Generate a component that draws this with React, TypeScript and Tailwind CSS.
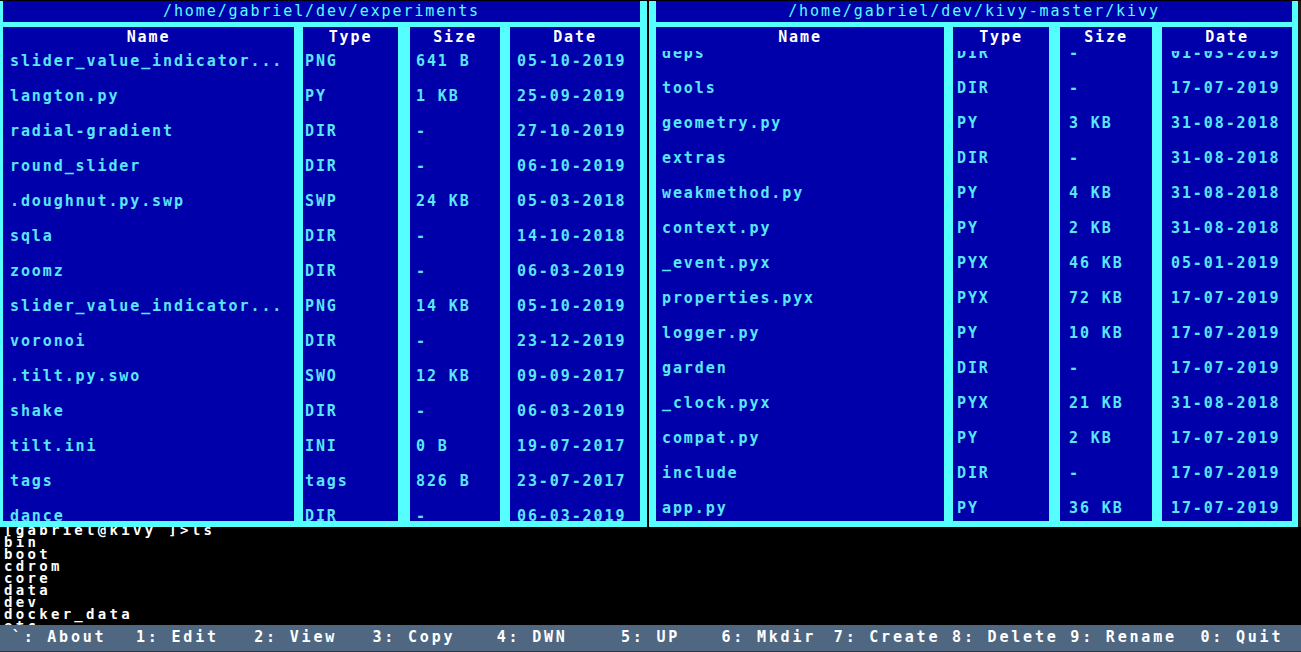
// Two-pane retro file manager with a shell strip and a function-key bar

const mono = "font-['DejaVu_Sans_Mono','Liberation_Mono',monospace]";

type Row = [string, string, string, string];

const leftRows: Row[] = [
  ['slider_value_indicator...', 'PNG', '641 B', '05-10-2019'],
  ['langton.py', 'PY', '1 KB', '25-09-2019'],
  ['radial-gradient', 'DIR', '-', '27-10-2019'],
  ['round_slider', 'DIR', '-', '06-10-2019'],
  ['.doughnut.py.swp', 'SWP', '24 KB', '05-03-2018'],
  ['sqla', 'DIR', '-', '14-10-2018'],
  ['zoomz', 'DIR', '-', '06-03-2019'],
  ['slider_value_indicator...', 'PNG', '14 KB', '05-10-2019'],
  ['voronoi', 'DIR', '-', '23-12-2019'],
  ['.tilt.py.swo', 'SWO', '12 KB', '09-09-2017'],
  ['shake', 'DIR', '-', '06-03-2019'],
  ['tilt.ini', 'INI', '0 B', '19-07-2017'],
  ['tags', 'tags', '826 B', '23-07-2017'],
  ['dance', 'DIR', '-', '06-03-2019'],
];

const rightRows: Row[] = [
  ['deps', 'DIR', '-', '01-03-2019'],
  ['tools', 'DIR', '-', '17-07-2019'],
  ['geometry.py', 'PY', '3 KB', '31-08-2018'],
  ['extras', 'DIR', '-', '31-08-2018'],
  ['weakmethod.py', 'PY', '4 KB', '31-08-2018'],
  ['context.py', 'PY', '2 KB', '31-08-2018'],
  ['_event.pyx', 'PYX', '46 KB', '05-01-2019'],
  ['properties.pyx', 'PYX', '72 KB', '17-07-2019'],
  ['logger.py', 'PY', '10 KB', '17-07-2019'],
  ['garden', 'DIR', '-', '17-07-2019'],
  ['_clock.pyx', 'PYX', '21 KB', '31-08-2018'],
  ['compat.py', 'PY', '2 KB', '17-07-2019'],
  ['include', 'DIR', '-', '17-07-2019'],
  ['app.py', 'PY', '36 KB', '17-07-2019'],
];

const headings = ['Name', 'Type', 'Size', 'Date'];

const keys = [
  '`: About',
  '1: Edit',
  '2: View',
  '3: Copy',
  '4: DWN',
  '5: UP',
  '6: Mkdir',
  '7: Create',
  '8: Delete',
  '9: Rename',
  '0: Quit',
];

const shell = ['[gabriel@kivy ]>ls', 'bin', 'boot', 'cdrom', 'core', 'data', 'dev', 'docker_data', 'etc'];

function Column({
  index,
  rows,
  width,
  pad,
  shift,
}: {
  index: number;
  rows: Row[];
  width: string;
  pad: string;
  shift: string;
}) {
  return (
    <div className={`${width} flex flex-col bg-[#0000aa] overflow-hidden`}>
      <div className="h-[24px] shrink-0 leading-[20px] text-center font-bold text-white">
        {headings[index]}
      </div>
      <div className="flex-1 overflow-hidden">
        <div className={shift}>
          {rows.map((r, i) => (
            <div
              key={i}
              className={`h-[35px] leading-[35px] whitespace-nowrap font-bold text-[#5ae6fa] ${pad}`}
            >
              {r[index]}
            </div>
          ))}
        </div>
      </div>
    </div>
  );
}

function Panel({
  path,
  rows,
  widths,
  pads,
  gaps,
  frame,
  shift,
}: {
  path: string;
  rows: Row[];
  widths: string[];
  pads: string[];
  gaps: string[];
  frame: string;
  shift: string;
}) {
  return (
    <div className={`flex flex-col bg-[#55ffff] pb-[6px] ${frame}`}>
      <div className="h-[21px] shrink-0 bg-[#0000aa] text-center leading-[21px] text-[#55ffff]">{path}</div>
      <div className="mt-[5px] flex flex-1 overflow-hidden">
        {widths.map((w, i) => (
          <div key={i} className={`flex ${gaps[i]}`}>
            <Column index={i} rows={rows} width={w} pad={pads[i]} shift={shift} />
          </div>
        ))}
      </div>
    </div>
  );
}

export default function App() {
  return (
    <div className={`w-[1301px] h-[652px] bg-black flex flex-col overflow-hidden text-[15px] tracking-[1.9px] ${mono}`}>
      {/* Panels */}
      <div className="flex h-[527px] shrink-0 pt-[1px]">
        <Panel
          path="/home/gabriel/dev/experiments"
          rows={leftRows}
          frame="w-[647px] pl-[3px] pr-[7px]"
          widths={['w-[291px]', 'w-[95px]', 'w-[90px]', 'w-[130px]']}
          gaps={['', 'ml-[9px]', 'ml-[12px]', 'ml-[10px]']}
          pads={['pl-[7px]', 'pl-[2px]', 'pl-[6px]', 'pl-[7px]']}
          shift="-mt-[7px]"
        />
        <div className="w-[2px] shrink-0" />
        <Panel
          path="/home/gabriel/dev/kivy-master/kivy"
          rows={rightRows}
          frame="w-[649px] pl-[7px] pr-[6px]"
          widths={['w-[288px]', 'w-[96px]', 'w-[92px]', 'w-[130px]']}
          gaps={['', 'ml-[9px]', 'ml-[11px]', 'ml-[10px]']}
          pads={['pl-[6px]', 'pl-[4px]', 'pl-[9px]', 'pl-[9px]']}
          shift="-mt-[15px]"
        />
        <div className="w-[3px] shrink-0 bg-[#1c1c1c]" />
      </div>

      {/* Shell output */}
      <div className="h-[98px] shrink-0 overflow-hidden pl-[4px] text-white">
        <div className="-mt-[3px] text-[14px] leading-[12px] tracking-[3.3px] font-bold">
          {shell.map((l, i) => (
            <div key={i} className="h-[12px] whitespace-pre">
              {l}
            </div>
          ))}
        </div>
      </div>

      {/* Function keys */}
      <div className="grid h-[26px] shrink-0 grid-cols-11 bg-[#4f6781] text-[15px] leading-[25px] tracking-[2.8px] font-bold text-white">
        {keys.map((k) => (
          <div key={k} className="whitespace-pre text-center">
            {k}
          </div>
        ))}
      </div>
      <div className="h-[1px] bg-[#2b3542]" />
    </div>
  );
}
